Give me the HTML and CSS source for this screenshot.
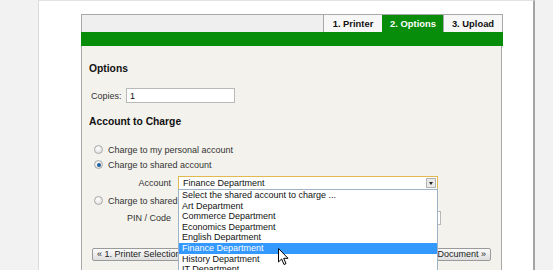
FILE: index.html
```html
<!DOCTYPE html>
<html lang="en">
<head>
    <meta charset="UTF-8">
    <title>Print Options</title>
    <link rel="stylesheet" href="styles.css">
</head>
<body>
    <div class="page">
        <div class="panel">
            <div class="tabs">
                <span class="tab">1. Printer</span>
                <span class="tab active">2. Options</span>
                <span class="tab">3. Upload</span>
            </div>
            <div class="bar"></div>
            <div class="content">
                <h3 class="first">Options</h3>
                <div class="copies">
                    <label>Copies:</label>
                    <input type="text" value="1">
                </div>

                <h3>Account to Charge</h3>
                <div class="radio-row first-radio"><span class="radio"></span>Charge to my personal account</div>
                <div class="radio-row"><span class="radio checked"></span>Charge to shared account</div>
                <div class="field-row">
                    <label>Account</label>
                    <div class="select">
                        <span>Finance Department</span>
                        <span class="arrow"></span>
                        <ul class="dropdown">
                            <li>Select the shared account to charge ...</li>
                            <li>Art Department</li>
                            <li>Commerce Department</li>
                            <li>Economics Department</li>
                            <li>English Department</li>
                            <li class="selected">Finance Department</li>
                            <li>History Department</li>
                            <li>IT Department</li>
                            <li>Library</li>
                        </ul>
                    </div>
                </div>
                <div class="radio-row"><span class="radio"></span>Charge to shared account using PIN / Code</div>
                <div class="field-row pin-row">
                    <label>PIN / Code</label>
                    <input type="text" class="pin">
                </div>

                <div class="buttons">
                    <button>&laquo; 1. Printer Selection</button>
                    <button>3. Upload Document &raquo;</button>
                </div>
            </div>
        </div>
    </div>
    <svg class="cursor" width="12" height="18" viewBox="0 0 12 18">
        <path d="M0.5 0.5 L0.5 14 L3.6 11 L6 16.5 L8 15.6 L5.7 10.3 L10 10.3 Z" fill="#fff" stroke="#000" stroke-width="1"/>
    </svg>
</body>
</html>
```

FILE: styles.css
```css
body {
    margin: 0;
    background-color: #f2f2f2;
    font-family: "Liberation Sans", Arial, sans-serif;
    font-size: 9px;
    color: #222;
    height: 100vh;
    overflow: hidden;
}

.page {
    margin-left: 38px;
    width: 497px;
    height: 100vh;
    background-color: #fff;
    border-left: 1px solid #dcdcdc;
    border-right: 2px solid #a4a4a4;
    border-top: 1px solid #e2e2e2;
    box-sizing: border-box;
    padding-top: 13px;
    padding-left: 42px;
}

.panel {
    width: 422px;
}

.tabs {
    display: flex;
    justify-content: flex-end;
    height: 17px;
    background-color: #efefef;
    border: 1px solid #a8a8a8;
    border-bottom: none;
}

.tab {
    width: 58px;
    border-left: 1px solid #a8a8a8;
    background-color: #f7f7f7;
    font-weight: bold;
    font-size: 9.4px;
    color: #111;
    text-align: center;
    line-height: 17px;
}

.tab.active {
    width: 60px;
    background-color: #078d09;
    border-left-color: #078d09;
    color: #fff;
}

.bar {
    height: 14px;
    background-color: #078d09;
}

.content {
    background-color: #f3f2ed;
    border-left: 1px solid #a8a8a8;
    border-right: 1px solid #a8a8a8;
    margin-right: 1px;
    padding: 0 10px 30px 7px;
}

h3 {
    margin: 12px 0 0 0;
    font-size: 10.3px;
    line-height: 13px;
    color: #111;
}

h3.first {
    margin-top: 0;
    padding-top: 16px;
}

.copies {
    display: flex;
    align-items: center;
    margin-top: 13px;
    padding-left: 2px;
    color: #333;
}

.copies label {
    width: 35px;
}

input {
    font-family: inherit;
    font-size: 9px;
    color: #111;
    border: 1px solid #b9b9b9;
    background-color: #fff;
    box-sizing: border-box;
    padding: 0 3px;
    margin: 0;
    outline: none;
}

.copies input {
    width: 109px;
    height: 15px;
}

.radio-row {
    display: flex;
    align-items: center;
    height: 15px;
    padding-left: 5px;
    color: #333;
}

.first-radio {
    margin-top: 14px;
}

.radio-row:nth-of-type(n) + .field-row + .radio-row {
    margin-top: 3px;
}

.radio {
    width: 9px;
    height: 9px;
    border-radius: 50%;
    border: 1px solid #a9a9a9;
    background: radial-gradient(circle at 40% 35%, #ffffff, #d9d9d9);
    box-sizing: border-box;
    margin-right: 5px;
    display: flex;
    align-items: center;
    justify-content: center;
}

.radio.checked::after {
    content: "";
    width: 4px;
    height: 4px;
    border-radius: 50%;
    background-color: #1f5f9e;
}

.field-row {
    display: flex;
    align-items: center;
    margin-top: 4px;
    color: #333;
}

.field-row label {
    width: 82px;
    text-align: right;
    margin-right: 7px;
}

.select {
    position: relative;
    width: 260px;
    height: 14px;
    box-sizing: border-box;
    border: 1px solid #e2b94f;
    background-color: #fff;
    color: #111;
    padding-left: 4px;
    line-height: 12px;
}

.arrow {
    position: absolute;
    right: 1px;
    top: 1px;
    width: 10px;
    height: 10px;
    box-sizing: border-box;
    border: 1px solid #b3b3b3;
    background-color: #e9e9e9;
}

.arrow::after {
    content: "";
    position: absolute;
    left: 2px;
    top: 3px;
    border-left: 2.5px solid transparent;
    border-right: 2.5px solid transparent;
    border-top: 3px solid #222;
}

.dropdown {
    position: absolute;
    top: 12px;
    left: -1px;
    width: 260px;
    margin: 0;
    padding: 0;
    list-style: none;
    background-color: #fff;
    border: 1px solid #9fb3c8;
    box-sizing: border-box;
    z-index: 2;
}

.dropdown li {
    height: 10.6px;
    line-height: 10.6px;
    padding-left: 3px;
    color: #111;
    white-space: nowrap;
}

.dropdown li.selected {
    background-color: #3399ff;
    color: #fff;
}

.pin-row {
    margin-top: 3px;
}

.pin {
    width: 263px;
    height: 14px;
}

.buttons {
    display: flex;
    justify-content: space-between;
    margin-top: 23px;
    padding-left: 3px;
}

button {
    font-family: inherit;
    font-size: 9px;
    color: #222;
    height: 13px;
    padding: 0 4px;
    line-height: 11px;
    border: 1px solid #9a9a9a;
    border-radius: 2px;
    background: linear-gradient(#fafafa, #dedede);
}

.cursor {
    position: absolute;
    left: 278px;
    top: 248px;
    z-index: 3;
}
```
